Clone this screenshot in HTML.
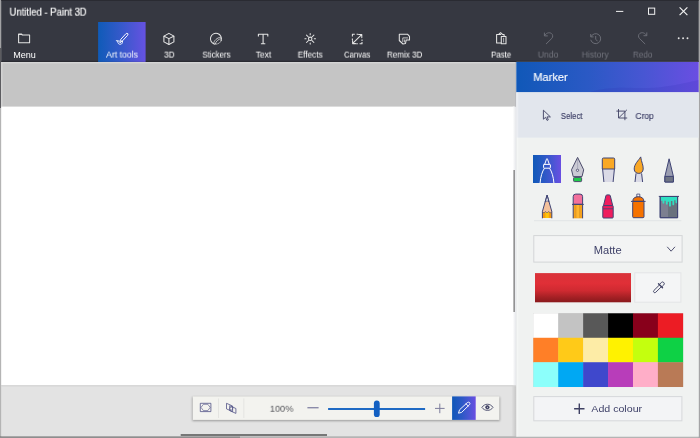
<!DOCTYPE html>
<html lang="en">
<head>
<meta charset="utf-8">
<title>Untitled - Paint 3D</title>
<style>
html,body{margin:0;padding:0;}
body{width:700px;height:438px;overflow:hidden;background:#b4b4b4;font-family:"Liberation Sans",sans-serif;position:relative;}
#art{position:absolute;left:0;top:0;}
#txt{position:absolute;left:0;top:0;width:0;height:0;}
.t{position:absolute;white-space:nowrap;line-height:1;transform-origin:0 0;will-change:transform;}
</style>
</head>
<body>
<svg id="art" width="700" height="438" viewBox="0 0 700 438" fill="none">
    <defs>
      <linearGradient id="gsel" x1="0" y1="0" x2="1" y2="0"><stop offset="0" stop-color="#1058b8"/><stop offset="0.4" stop-color="#2b59c5"/><stop offset="0.7" stop-color="#4856d3"/><stop offset="1" stop-color="#6a4ee2"/></linearGradient>
      <linearGradient id="gtab" x1="0" y1="0" x2="1" y2="0"><stop offset="0" stop-color="#0f5bb8"/><stop offset="0.5" stop-color="#3759cb"/><stop offset="1" stop-color="#6652e1"/></linearGradient>
      <linearGradient id="gred" x1="0" y1="0" x2="0" y2="1"><stop offset="0" stop-color="#d9333a"/><stop offset="0.35" stop-color="#e02f37"/><stop offset="0.6" stop-color="#cf2a31"/><stop offset="0.85" stop-color="#a01f23"/><stop offset="1" stop-color="#8a1a1d"/></linearGradient>
      <linearGradient id="gedge" x1="0" y1="0" x2="1" y2="0"><stop offset="0" stop-color="#ffffff"/><stop offset="1" stop-color="#e2e4e8"/></linearGradient>
      <linearGradient id="gshl" x1="0" y1="0" x2="1" y2="0"><stop offset="0" stop-color="#000" stop-opacity="0"/><stop offset="1" stop-color="#000" stop-opacity="0.13"/></linearGradient>
      <filter id="sh" x="-5%" y="-30%" width="110%" height="170%"><feGaussianBlur stdDeviation="1.3"/></filter>
    </defs>
    <!-- page background strips -->
    <rect x="0" y="0" width="700" height="438" fill="#b4b4b4"/>
    <rect x="0" y="436" width="240" height="2" fill="#8e8e8e"/>
    <rect x="0" y="0" width="1.2" height="48" fill="#a2a2a4"/>
    <rect x="0" y="48" width="1.2" height="60" fill="#5c5c60"/>
    <rect x="698.7" y="0" width="1.3" height="438" fill="#a4a4a6"/>
    <!-- window -->
    <rect x="1.2" y="0" width="697.5" height="436.2" fill="#c5c5c5"/>
    <rect x="1.2" y="61.9" width="514.2" height="1.5" fill="#d5d5d5"/>
    <rect x="1.2" y="61.9" width="1.2" height="44.7" fill="#d8d8d8"/>
    <!-- canvas -->
    <rect x="1.2" y="106.6" width="513.4" height="278.8" fill="#ffffff"/>
    <rect x="512.8" y="106.6" width="3.6" height="278.8" fill="url(#gedge)"/>
    <rect x="515.3" y="61.9" width="1" height="44.7" fill="#b8b8bc"/>
    <rect x="513.6" y="170" width="1" height="142" fill="#555"/>
    <!-- bottom area -->
    <rect x="1.2" y="385.4" width="515.1" height="50.8" fill="#e3e3e3"/>
    <rect x="1.2" y="385.4" width="515.1" height="1" fill="#d2d2d2"/>
    <rect x="511.3" y="386.4" width="5" height="49.8" fill="url(#gshl)"/>
    <rect x="180.7" y="434.1" width="146.3" height="1.8" fill="#6b6b6b"/>
    <!-- zoom bar -->
    <rect x="192.4" y="397" width="307.4" height="24" fill="#000" opacity="0.32" filter="url(#sh)"/>
    <rect x="192.8" y="396.4" width="306.5" height="23.5" fill="#f3f3ef"/>
    <rect x="218" y="398.4" width="0.9" height="19.6" fill="#e3e3df"/>
    <rect x="243.4" y="398.4" width="0.9" height="19.6" fill="#e3e3df"/>
    <rect x="307.4" y="407" width="11.2" height="1.4" fill="#8b8ba9"/>
    <rect x="328.1" y="408" width="97" height="2" fill="#1f6ac4"/>
    <rect x="373.9" y="400.6" width="5.8" height="16.5" rx="2.9" fill="#1360c2"/>
    <rect x="452.1" y="396.4" width="23.6" height="23.5" fill="url(#gsel)"/>
    <!-- title/tool bar -->
    <rect x="1.2" y="0" width="697.5" height="61.9" fill="#363841"/>
    <rect x="1.2" y="60.8" width="697.5" height="1.1" fill="#282930"/>
    <rect x="1.2" y="0" width="697.5" height="0.9" fill="#2a2b32"/>
    <rect x="98.1" y="22" width="47.5" height="39.9" fill="url(#gtab)"/>
    <rect x="616" y="10.9" width="7.3" height="1" fill="#f0f0f0"/>
    <rect x="648.5" y="8.1" width="6.2" height="6.2" stroke="#f0f0f0" stroke-width="1"/>
    <circle cx="678.7" cy="38.2" r="0.95" fill="#e6e6e6"/><circle cx="683.1" cy="38.2" r="0.95" fill="#e6e6e6"/><circle cx="687.5" cy="38.2" r="0.95" fill="#e6e6e6"/>
    <!-- side panel -->
    <rect x="516.3" y="61.9" width="182.4" height="374.8" fill="#f0f2f1"/>
    <rect x="516.3" y="61.9" width="182.4" height="30.4" fill="url(#gsel)"/>
    <path d="M590 92.3C612 84 640 90 662 87C680 84.500 690 82 698.7 80V92.3Z" fill="#2a2ab0" opacity="0.16"/>
    <rect x="516.3" y="92.3" width="182.4" height="45.3" fill="#e2e6ed"/>
    <rect x="516.3" y="92.3" width="2" height="344.4" fill="#ffffff" opacity="0.3"/>
    <rect x="534" y="220.2" width="147.4" height="1" fill="#e2e4e5"/>
    <rect x="533.8" y="235.6" width="148.3" height="26.5" fill="#f3f4f4" stroke="#d3d5d7" stroke-width="1"/>
    <rect x="535" y="273.1" width="96" height="29.2" fill="url(#gred)"/>
    <rect x="634.8" y="272.8" width="46.1" height="29.4" fill="#f4f5f6" stroke="#e3e5e7" stroke-width="1"/>
    <rect x="533" y="313" width="150.2" height="74" fill="#000" opacity="0.12"/>
    <rect x="533.30" y="313.30" width="25.22" height="24.77" fill="#ffffff"/>
    <rect x="558.22" y="313.30" width="25.22" height="24.77" fill="#c3c3c3"/>
    <rect x="583.14" y="313.30" width="25.22" height="24.77" fill="#585858"/>
    <rect x="608.06" y="313.30" width="25.22" height="24.77" fill="#000000"/>
    <rect x="632.98" y="313.30" width="25.22" height="24.77" fill="#88001b"/>
    <rect x="657.90" y="313.30" width="25.22" height="24.77" fill="#ec1c24"/>
    <rect x="533.30" y="337.77" width="25.22" height="24.77" fill="#ff7f27"/>
    <rect x="558.22" y="337.77" width="25.22" height="24.77" fill="#ffca18"/>
    <rect x="583.14" y="337.77" width="25.22" height="24.77" fill="#fdeca6"/>
    <rect x="608.06" y="337.77" width="25.22" height="24.77" fill="#fff200"/>
    <rect x="632.98" y="337.77" width="25.22" height="24.77" fill="#c4ff0e"/>
    <rect x="657.90" y="337.77" width="25.22" height="24.77" fill="#0ed145"/>
    <rect x="533.30" y="362.24" width="25.22" height="24.77" fill="#8cfffb"/>
    <rect x="558.22" y="362.24" width="25.22" height="24.77" fill="#00a8f3"/>
    <rect x="583.14" y="362.24" width="25.22" height="24.77" fill="#3f48cc"/>
    <rect x="608.06" y="362.24" width="25.22" height="24.77" fill="#b83dba"/>
    <rect x="632.98" y="362.24" width="25.22" height="24.77" fill="#ffaec8"/>
    <rect x="657.90" y="362.24" width="25.22" height="24.77" fill="#b97a56"/>
    <rect x="533.8" y="396.6" width="148.1" height="24.2" fill="#f3f4f6" stroke="#d6d8db" stroke-width="1"/>

    <!-- toolbar icons (page coordinates) -->
    <g stroke="#ffffff" stroke-width="0.9" stroke-linecap="round" stroke-linejoin="round" fill="none"><rect x="-1.15" y="-4.9" width="2.3" height="9.8" rx="1.15" transform="translate(124.2 37.3) rotate(42.5)"/><path d="M116.3 40.7L122.5 41.5"/><path d="M117.7 41.1C117.5 43.4 119 44.6 120.6 44.3C122 44 122.7 42.8 122.5 41.5"/><circle cx="120.1" cy="42.5" r="0.5" stroke-width="0.6"/></g>
    <g stroke="#e4e4e4" stroke-width="1.05" stroke-linejoin="round" stroke-linecap="round" fill="none">
      <!-- menu -->
      <path d="M18.6 34.1H21.6L22.2 34.9H29.6V42.7H18.6Z"/><path d="M18.6 34.5H21.8" stroke-width="0.8"/>
      <!-- 3D -->
      <path d="M168.9 33.4L173.9 36.1V41.9L168.9 44.5L163.9 41.9V36.1Z"/><path d="M164.1 36.3L168.9 38.6L173.7 36.3M168.9 38.6V44.3"/>
      <!-- stickers -->
      <path d="M221.2 40.4A5.5 5.5 0 1 0 214.2 44"/><path d="M214.2 44C217.8 44.6 220.6 42.6 221.2 40.4" stroke-dasharray="0.9 1.1" stroke-width="0.8"/>
      <path d="M213.6 43.4C214 40.6 217 37.6 220.6 37.2M215.2 44C215.8 41.4 218.4 39 221.2 38.6" stroke-width="0.8"/>
      <!-- text -->
      <path d="M258.4 36.4V34.3H267.8V36.4M263.1 34.3V43.7M260.9 43.7H265.3" stroke-width="1.1" stroke-linecap="butt"/>
      <!-- effects -->
      <circle cx="310.2" cy="38.8" r="1.7"/>
      <path d="M310.2 33.5V34.7M310.2 42.9V44.1M304.9 38.8H306.1M314.3 38.8H315.5M306.5 35.1L308.4 37M312 40.6L313.9 42.5M313.9 35.1L312 37M308.4 40.6L306.5 42.5"/>
      <!-- canvas -->
      <path d="M352.4 36.6V34.3H354.8M356.6 34.3H358.2M362 39.4V41M362 41.9V43.8H359.6M357.8 43.8H356.2M352.4 38.4V40" stroke-linecap="butt"/>
      <path d="M353 43.2L361.6 34.6M358.6 34.4H361.8V37.6M352.6 40.6V43.6H355.6"/>
      <!-- remix 3d -->
      <path d="M399.3 34.3H407.7L409.5 36.3V39.9H406.2L405.5 43.5L403 44L399.3 40.5Z"/><path d="M402.8 41.6V37.9H407.6M404.6 39.9V42" stroke-width="0.8"/>
      <!-- paste -->
      <path d="M500.8 34.4H496.6V43H500.8"/><path d="M498.7 34.4L500.6 32.7L502.5 34.4H504.1V36.2"/><rect x="501.3" y="36.5" width="4.7" height="7.3"/><path d="M503.6 38.2V42" stroke-width="0.7"/>
    </g>
    <g stroke="#6b6d76" stroke-width="1" stroke-linejoin="round" stroke-linecap="round" fill="none">
      <!-- undo -->
      <path d="M544.4 33V35.9H547.4"/><path d="M544.7 35.5C546 33.1 549 32 551.2 33.3C553.1 34.6 553.1 37 551.8 38.4L546.3 43.8"/>
      <!-- history -->
      <path d="M591 36.6A5.05 5.05 0 1 1 590.8 40.2"/><path d="M590.7 34.4V36.9H593.2"/><path d="M595.7 36.4V39.2L597.2 40.9"/>
      <!-- redo -->
      <path d="M646.8 32.8V35.7H643.9"/><path d="M646.5 35.3C645.2 32.9 642.2 32 640 33.3C638.1 34.6 638.1 37 639.4 38.4L644.9 43.8"/>
    </g>
    <path d="M679.6 7.3L687.4 15.1M687.4 7.3L679.6 15.1" stroke="#f2f2f2" stroke-width="1.15"/>
    <!-- select cursor -->
    <path d="M543.4 110.2V119.2L545.6 117.3L547 120.4L548.3 119.8L547 116.9L550.4 116.9Z" stroke="#3f4163" stroke-width="0.9" stroke-linejoin="round"/>
    <!-- crop -->
    <path d="M618.5 109V118H627.2M616.4 111.1H624.9V120.2M626.9 109.8L619 117.6" stroke="#3f4163" stroke-width="0.9"/>

    <!-- marker selected -->
    <rect x="533" y="155" width="28" height="28" fill="url(#gsel)"/>
    <g stroke="#fff" stroke-width="1" stroke-linejoin="round" stroke-linecap="round">
      <path d="M544.7 164.3L546.5 159.2Q547 158 547.5 159.2L549.3 164.3"/>
      <rect x="543.6" y="164.4" width="6.8" height="3.8" rx="0.6"/>
      <path d="M544.2 168.6C542.2 171.5 540.6 176.5 540.1 182.8M549.8 168.6C551.8 171.5 553.4 176.5 553.9 182.8"/>
    </g>

    <!-- calligraphy pen -->
    <g stroke="#4b4b6b" stroke-width="1" stroke-linejoin="round">
      <path d="M577.6 157.4L583.7 169.8L582 176.6H573.2L571.5 169.8Z" fill="#cacad4"/>
      <path d="M577.6 159V168.6" stroke-width="0.5" stroke="#8c8ca4"/>
      <circle cx="577.5" cy="170.3" r="1.15" fill="#ececf2" stroke-width="0.85"/>
      <rect x="573.6" y="177.4" width="8" height="4.2" rx="0.8" fill="#1fcc4b"/>
    </g>

    <!-- oil brush -->
    <g stroke="#3f4474" stroke-width="1" stroke-linejoin="round">
      <path d="M602.6 169H614.4L613.1 182H603.9Z" fill="#dadae6" stroke="none"/><path d="M602.6 169L603.9 182M614.4 169L613.1 182"/>
      <path d="M602.3 159.2Q602.3 158 603.5 158H613.5Q614.7 158 614.7 159.2V169H602.3Z" fill="#f9a825"/>
    </g>

    <!-- watercolour brush -->
    <g stroke="#3f4474" stroke-width="1" stroke-linejoin="round">
      <path d="M636 173.4H641.6L642.6 182H635Z" fill="#dadae6" stroke="none"/><path d="M636 173.4L635 182M641.6 173.4L642.6 182"/>
      <path d="M640.7 156.9C641.3 162 643.4 165 643.2 169C643 172 641 173.4 638.8 173.4C636.4 173.4 634.2 172 634.2 169C634.2 164 638.6 160.4 640.7 156.9Z" fill="#f9a825"/>
    </g>

    <!-- pixel pen -->
    <g stroke="#3f4474" stroke-width="1" stroke-linejoin="round">
      <path d="M669.1 158.8L673.4 176.4V182H664.9V176.4Z" fill="#9b9eb1"/>
      <rect x="664.9" y="176.4" width="8.5" height="5.6" fill="#6e7484"/>
    </g>

    <!-- pencil -->
    <g stroke="#3f4474" stroke-width="1" stroke-linejoin="round">
      <rect x="542.4" y="211.6" width="9.4" height="6.4" fill="#f39a12" stroke="none"/>
      <rect x="545.4" y="211" width="3.4" height="7" fill="#ffc50a" stroke="none"/>
      <path d="M545.1 202L547.1 201L549.1 202L551.8 211.6L550.2 213L548.7 211.4L547.1 213L545.5 211.4L544 213L542.4 211.6Z" fill="#f4c19c" stroke="none"/>
      <path d="M547.1 195.2L549 201.8L547.1 200.8L545.2 201.8Z" fill="#fff" stroke-width="0.8"/>
      <path d="M542.4 218.3V211.5L547.1 195L551.8 211.5V218.3"/><path d="M542.4 211.6L544 213L545.5 211.4L547.1 213L548.7 211.4L550.2 213L551.8 211.6" stroke-width="0.6"/>
    </g>

    <!-- eraser -->
    <g stroke="#3f4474" stroke-width="1" stroke-linejoin="round">
      <rect x="573.2" y="204.4" width="9.4" height="13.9" fill="#f5a21e" stroke="none"/><path d="M573.2 204.4V218.3M582.6 204.4V218.3"/>
      <rect x="576" y="204.8" width="3.6" height="13" fill="#ffb52e" stroke="none"/>
      <path d="M576 205V218M579.6 205V218" stroke="#c98a2a" stroke-width="0.5"/>
      <path d="M573.2 204.3V196.6Q573.2 194.1 575.7 194.1H580.1Q582.6 194.1 582.6 196.6V204.3Z" fill="#f2709c"/>
      <path d="M572 204.4H583.8"/>
    </g>

    <!-- crayon -->
    <g stroke="#3f4474" stroke-width="1" stroke-linejoin="round">
      <path d="M605.9 195.8Q606.1 194.9 607 194.9H609.2Q610.1 194.9 610.3 195.8L612.7 205.6H603.5Z" fill="#ef1c5d"/>
      <rect x="602.8" y="205.6" width="10.4" height="12.4" rx="0.8" fill="#ef1c5d"/>
      <path d="M603 208.8H613" stroke-width="0.8"/>
    </g>

    <!-- spray can -->
    <g stroke="#3f4474" stroke-width="1" stroke-linejoin="round">
      <rect x="636.8" y="194.1" width="3" height="3" fill="#f4f4f8" stroke-width="0.8"/>
      <path d="M632.8 201.3C632.8 198 635 196.8 638.3 196.8C641.6 196.8 643.8 198 643.8 201.3Z" fill="#f57200"/>
      <rect x="632.7" y="201.5" width="11.3" height="16.2" rx="1" fill="#f57200"/>
      <path d="M631 201.4H645.6"/>
    </g>

    <!-- fill bucket -->
    <g stroke="#3f4474" stroke-width="1" stroke-linejoin="round">
      <rect x="660.2" y="196.5" width="17.4" height="21.2" fill="#7c7f90"/>
      <rect x="668" y="197" width="9.1" height="20.2" fill="#69717d" stroke="none"/>
      <path d="M660.7 196.8H677.1V202.6Q676.3 204.2 675.5 202.6V200.2H674.2V204.4Q673.3 206.2 672.4 204.4V201H670.9V206Q670 207.6 669.1 206V201.8H667.7V204Q666.8 205.6 665.9 204V200.8H664.3V203Q663.4 204.4 662.5 203V200.8H660.7Z" fill="#2fe0c2" stroke="none"/>
      <rect x="660.2" y="196.5" width="17.4" height="21.2"/>
      <path d="M658.8 196.4H679"/>
    </g>

    <!-- zoom bar icons -->
    <g stroke="#484a80" stroke-width="0.75" stroke-linejoin="round">
      <rect x="200.3" y="403.3" width="10.6" height="8.3"/>
      <path d="M201 407.4L203.4 404.3H207.8L210.2 407.4L207.8 410.6H203.4Z" stroke-width="0.6"/>
      <path d="M226.5 403.3L232.6 406V411.6L226.5 408.9Z"/>
      <path d="M229.7 405.7L235.9 408.5V413.4L229.7 410.6Z"/>
      <circle cx="231.2" cy="408.6" r="1.5" stroke-width="0.6"/>
    </g>
    <path d="M439.8 403.6V413.2M435 408.4H444.6" stroke="#7d7d9c" stroke-width="1"/>
    <g stroke="#fff" stroke-width="0.95" stroke-linejoin="round" stroke-linecap="round">
      <path d="M467.2 402.7C467.9 402 469 402 469.5 402.5C470.1 403.1 470.1 404.1 469.4 404.8L461.6 412.4L458.5 413.2L459.4 410.2Z"/>
      <path d="M466.1 403.9L468.3 406.1"/>
    </g>
    <g stroke="#3f4163" stroke-width="0.85">
      <path d="M481.9 407.4C484.6 403.2 490.4 403.2 493 407.4C490.4 411.4 484.6 411.4 481.9 407.4Z"/>
      <circle cx="487.4" cy="407.3" r="1.7" fill="#3f4163"/>
      <circle cx="487.4" cy="407.3" r="0.55" fill="#f3f3ef" stroke="none"/>
    </g>
    <!-- dropdown chevron -->
    <path d="M667.2 246.8L671.1 251.2L675 246.8" stroke="#3f4163" stroke-width="0.9"/>
    <!-- eyedropper -->
    <g transform="translate(653.9 292.3) rotate(-44.7)" stroke="#3f4163" stroke-width="0.9" stroke-linejoin="round" stroke-linecap="round">
      <path d="M9.2 -1.3H1.3A1.3 1.3 0 0 0 1.3 1.3H9.2"/>
      <path d="M9.3 -2.9V2.9" stroke-width="1.3"/>
      <path d="M9.4 -1.7H12.2A1.7 1.7 0 0 1 12.2 1.7H9.4"/>
    </g>
    <!-- add colour plus -->
    <path d="M579.3 403.6V414M574.1 408.8H584.5" stroke="#3f4163" stroke-width="1.4"/>
  </svg>
<div id="txt">
  <div class="t" style="left:9px;top:7px;font-size:10.3px;color:#ffffff;transform:translate(0.51px,0.68px) scaleX(0.9238);-webkit-text-stroke:0.15px;">Untitled - Paint 3D</div>
  <div class="t" style="left:13px;top:50px;font-size:9px;color:#ffffff;transform:translate(0.25px,0.60px) scaleX(1.0038);">Menu</div>
  <div class="t" style="left:106px;top:50px;font-size:9px;color:#ffffff;transform:translate(0.00px,0.60px) scaleX(0.9687);">Art tools</div>
  <div class="t" style="left:163px;top:50px;font-size:9px;color:#ffffff;transform:translate(0.95px,0.60px) scaleX(0.9302);">3D</div>
  <div class="t" style="left:202px;top:50px;font-size:9px;color:#ffffff;transform:translate(0.37px,0.60px) scaleX(0.8800);">Stickers</div>
  <div class="t" style="left:255px;top:50px;font-size:9px;color:#ffffff;transform:translate(0.77px,0.60px) scaleX(0.9305);">Text</div>
  <div class="t" style="left:297px;top:50px;font-size:9px;color:#ffffff;transform:translate(0.71px,0.60px) scaleX(0.9143);">Effects</div>
  <div class="t" style="left:343px;top:50px;font-size:9px;color:#ffffff;transform:translate(0.97px,0.60px) scaleX(0.8605);">Canvas</div>
  <div class="t" style="left:386px;top:50px;font-size:9px;color:#ffffff;transform:translate(0.93px,0.60px) scaleX(0.8963);">Remix 3D</div>
  <div class="t" style="left:491px;top:50px;font-size:9px;color:#ffffff;transform:translate(0.15px,0.60px) scaleX(0.8684);">Paste</div>
  <div class="t" style="left:537px;top:50px;font-size:9px;color:#74767f;transform:translate(0.78px,0.60px) scaleX(0.9568);">Undo</div>
  <div class="t" style="left:581px;top:50px;font-size:9px;color:#74767f;transform:translate(0.68px,0.60px) scaleX(0.9615);">History</div>
  <div class="t" style="left:632px;top:50px;font-size:9px;color:#74767f;transform:translate(0.92px,0.60px) scaleX(0.9028);">Redo</div>
  <div class="t" style="left:533px;top:72px;font-size:11.2px;color:#ffffff;transform:translate(0.34px,0.00px) scaleX(0.9896);-webkit-text-stroke:0.15px;">Marker</div>
  <div class="t" style="left:560px;top:111px;font-size:9.2px;color:#3e4068;transform:translate(0.78px,0.98px) scaleX(0.8480);-webkit-text-stroke:0.15px;">Select</div>
  <div class="t" style="left:635px;top:111px;font-size:9.2px;color:#3e4068;transform:translate(0.44px,0.98px) scaleX(0.9158);-webkit-text-stroke:0.15px;">Crop</div>
  <div class="t" style="left:593px;top:245px;font-size:10.0px;color:#3e4068;transform:translate(0.82px,0.90px) scaleX(1.1092);">Matte</div>
  <div class="t" style="left:591px;top:404px;font-size:9.5px;color:#3e4068;transform:translate(0.30px,0.30px) scaleX(1.1182);">Add colour</div>
  <div class="t" style="left:269px;top:403px;font-size:9.7px;color:#56575c;transform:translate(0.79px,0.80px) scaleX(0.9526);">100%</div>
</div>
</body>
</html>
